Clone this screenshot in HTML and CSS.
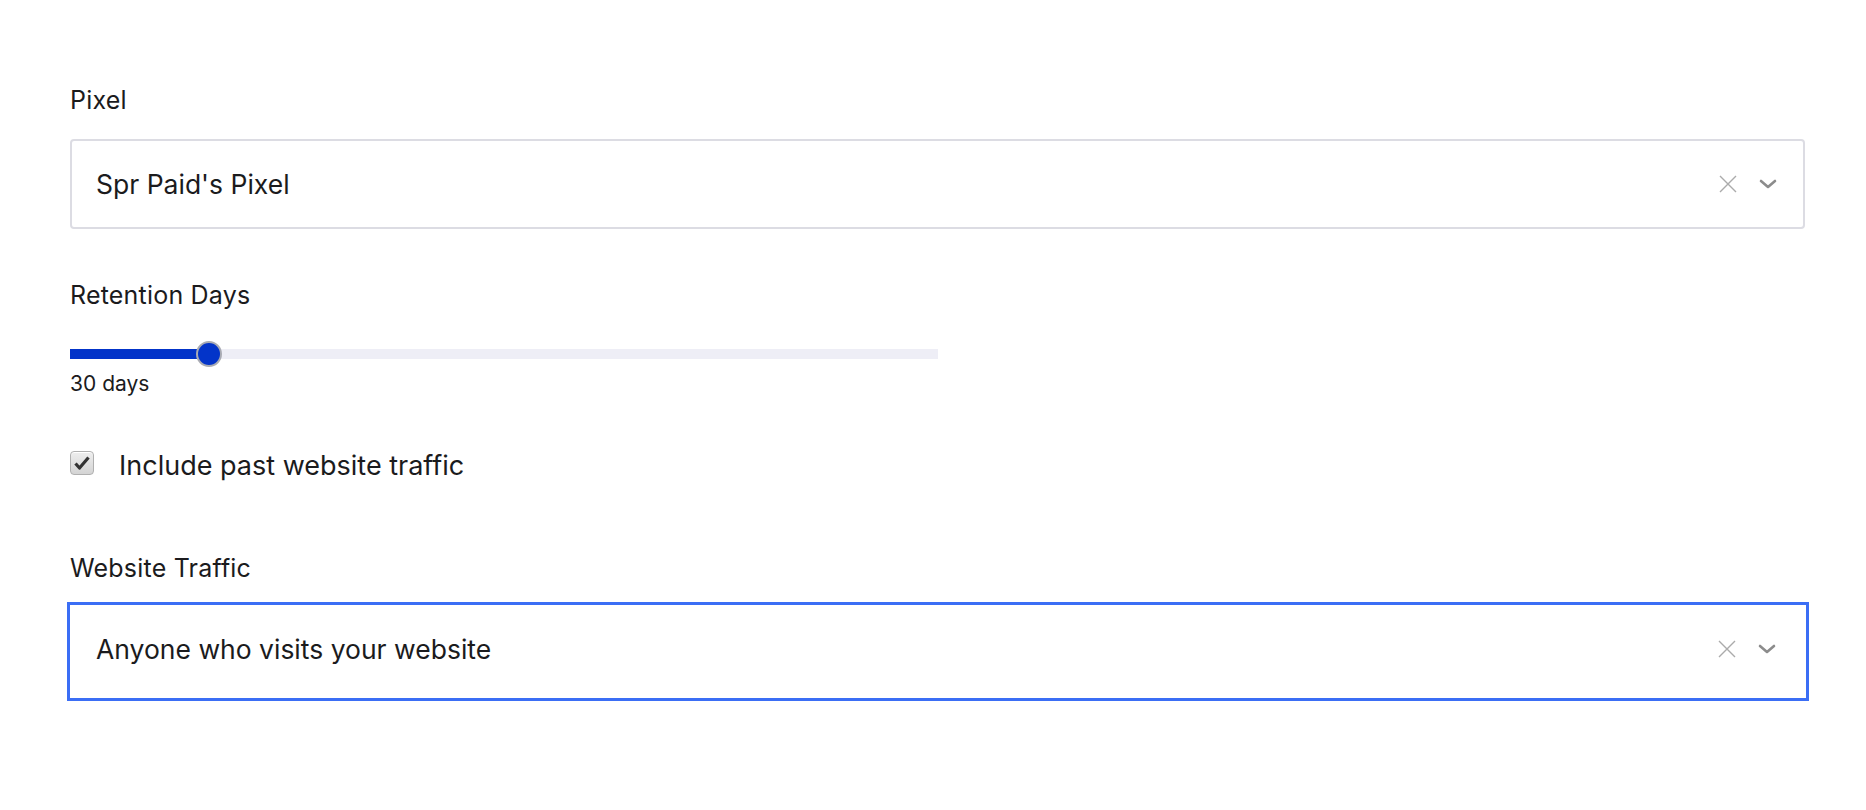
FILE: index.html
```html
<!DOCTYPE html>
<html lang="en">
<head>
    <meta charset="UTF-8">
    <title>audience</title>
    <meta name="viewport" content="width=device-width, initial-scale=1.0">
    <link rel="stylesheet" href="styles.css">
</head>
<body>
    <div class="form">
        <label class="field-label">Pixel</label>
        <div class="select">
            <span class="select-value">Spr Paid's Pixel</span>
            <span class="select-icons">
                <svg class="icon-clear" width="18" height="18" viewBox="0 0 18 18">
                    <path d="M1 1L17 17M17 1L1 17" stroke="#ababab" stroke-width="1.4" fill="none"/>
                </svg>
                <svg class="icon-arrow" width="18" height="10" viewBox="0 0 18 10">
                    <path d="M2 2L9 8L16 2" stroke="#8c8c8c" stroke-width="2.6" fill="none" stroke-linecap="round" stroke-linejoin="round"/>
                </svg>
            </span>
        </div>

        <label class="field-label retention">Retention Days</label>
        <div class="slider">
            <div class="slider-track">
                <div class="slider-fill" style="width: 16%"></div>
            </div>
            <div class="slider-thumb" style="left: 16%"></div>
        </div>
        <p class="slider-value">30 days</p>

        <div class="check-row">
            <span class="checkbox">
                <svg width="16" height="14" viewBox="0 0 16 14">
                    <path d="M1.5 7.5L5.5 12L14.5 1.5" stroke="#333" stroke-width="3.2" fill="none" stroke-linejoin="round"/>
                </svg>
            </span>
            <span class="check-text">Include past website traffic</span>
        </div>

        <label class="field-label traffic">Website Traffic</label>
        <div class="select is-focused">
            <span class="select-value">Anyone who visits your website</span>
            <span class="select-icons">
                <svg class="icon-clear" width="18" height="18" viewBox="0 0 18 18">
                    <path d="M1 1L17 17M17 1L1 17" stroke="#ababab" stroke-width="1.4" fill="none"/>
                </svg>
                <svg class="icon-arrow" width="18" height="10" viewBox="0 0 18 10">
                    <path d="M2 2L9 8L16 2" stroke="#8c8c8c" stroke-width="2.6" fill="none" stroke-linecap="round" stroke-linejoin="round"/>
                </svg>
            </span>
        </div>
    </div>
</body>
</html>
```

FILE: styles.css
```css
body {
    margin: 0;
    background: #fff;
    color: #1b1b1d;
    font-family: Inter, "Noto Sans", sans-serif;
}
p {
    margin: 0;
}
.form {
    display: flex;
    flex-direction: column;
    padding: 86px 61px 0 70px;
}
.field-label {
    display: block;
    font-size: 25px;
    line-height: 28px;
    letter-spacing: .2px;
}
.select {
    box-sizing: border-box;
    display: flex;
    align-items: center;
    justify-content: space-between;
    height: 90px;
    margin-top: 25px;
    padding: 0 26px 0 24px;
    border: 2px solid #dcdce3;
    border-radius: 4px;
}
.select-value {
    font-size: 26.5px;
    line-height: 32px;
}
.select-icons {
    display: flex;
    align-items: center;
    gap: 22px;
}
.icon-clear,
.icon-arrow {
    display: block;
}
.retention {
    margin-top: 52px;
}
.slider {
    position: relative;
    width: 868px;
    height: 26px;
    margin-top: 32px;
}
.slider-track {
    position: absolute;
    left: 0;
    right: 0;
    top: 8px;
    height: 10px;
    background: #eeeef6;
}
.slider-fill {
    height: 100%;
    background: #0334c9;
}
.slider-thumb {
    position: absolute;
    top: 0;
    box-sizing: border-box;
    width: 26px;
    height: 26px;
    margin-left: -13px;
    border: 2px solid #a9abb3;
    border-radius: 50%;
    background: #0334c9;
}
.slider-value {
    margin-top: 5px;
    font-size: 21px;
    line-height: 24px;
}
.check-row {
    display: flex;
    align-items: flex-start;
    margin-top: 54px;
}
.checkbox {
    box-sizing: border-box;
    display: flex;
    align-items: center;
    justify-content: center;
    width: 24px;
    height: 24px;
    margin-top: 1px;
    border: 1px solid #b0b0b0;
    border-radius: 4px;
    background: linear-gradient(#eeeeee, #d4d4d4);
    box-shadow: inset 0 1px 0 #fff;
}
.check-text {
    margin-left: 25px;
    font-size: 27px;
    line-height: 32px;
}
.traffic {
    margin-top: 72px;
}
.select.is-focused {
    height: 99px;
    margin: 20px -4px 0 -3px;
    padding: 0 30px 5px 26px;
    border: 3px solid #3b6ef5;
    border-radius: 0;
}
```
